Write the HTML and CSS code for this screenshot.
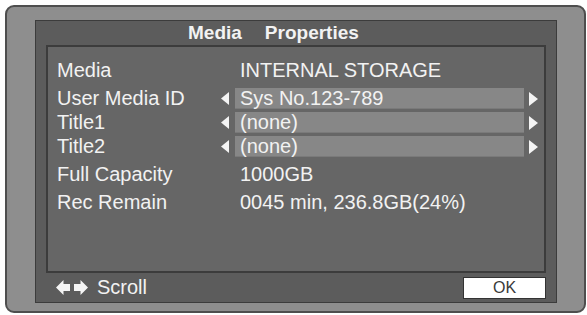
FILE: index.html
```html
<!DOCTYPE html>
<html lang="en">
<head>
  <meta charset="UTF-8" />
  <title>Media Properties</title>
  <link rel="stylesheet" href="styles.css">
</head>
<body>
  <div class="bezel">
    <div class="panel">
      <div class="title-bar">
        <span>Media</span>
        <span>Properties</span>
      </div>

      <div class="content">
        <div class="row">
          <span class="label">Media</span>
          <span class="arrow-slot"></span>
          <span class="value">INTERNAL STORAGE</span>
        </div>

        <div class="field-group">
          <div class="row">
            <span class="label">User Media ID</span>
            <span class="arrow-slot"><svg width="8" height="13" viewBox="0 0 8 13"><polygon points="8,0 8,13 0,6.5" fill="#f4f4f4"/></svg></span>
            <span class="value bar">Sys No.123-789</span>
            <span class="arrow-slot right"><svg width="9" height="14" viewBox="0 0 9 14"><polygon points="0,0 0,14 9,7" fill="#f4f4f4"/></svg></span>
          </div>
          <div class="row">
            <span class="label">Title1</span>
            <span class="arrow-slot"><svg width="8" height="13" viewBox="0 0 8 13"><polygon points="8,0 8,13 0,6.5" fill="#f4f4f4"/></svg></span>
            <span class="value bar">(none)</span>
            <span class="arrow-slot right"><svg width="9" height="14" viewBox="0 0 9 14"><polygon points="0,0 0,14 9,7" fill="#f4f4f4"/></svg></span>
          </div>
          <div class="row">
            <span class="label">Title2</span>
            <span class="arrow-slot"><svg width="8" height="13" viewBox="0 0 8 13"><polygon points="8,0 8,13 0,6.5" fill="#f4f4f4"/></svg></span>
            <span class="value bar">(none)</span>
            <span class="arrow-slot right"><svg width="9" height="14" viewBox="0 0 9 14"><polygon points="0,0 0,14 9,7" fill="#f4f4f4"/></svg></span>
          </div>
        </div>

        <div class="row">
          <span class="label">Full Capacity</span>
          <span class="arrow-slot"></span>
          <span class="value">1000GB</span>
        </div>
        <div class="row">
          <span class="label">Rec Remain</span>
          <span class="arrow-slot"></span>
          <span class="value">0045 min, 236.8GB(24%)</span>
        </div>
      </div>

      <div class="footer">
        <span class="scroll-hint">
          <svg width="32" height="15" viewBox="0 0 32 15">
            <polygon points="0,7.5 7.5,0 7.5,4 14,4 14,11 7.5,11 7.5,15" fill="#f4f4f4"/>
            <polygon points="32,7.5 24.5,0 24.5,4 18,4 18,11 24.5,11 24.5,15" fill="#f4f4f4"/>
          </svg>
          Scroll
        </span>
        <button class="ok-button">OK</button>
      </div>
    </div>
  </div>
</body>
</html>
```

FILE: styles.css
```css
:root {
  --bezel: #8e8e8e;
  --panel: #5c5c5c;
  --content: #666666;
  --bar: #878787;
  --edge: #3c3c3c;
  --text: #f2f2f2;
}

body {
  margin: 0;
  background-color: #ffffff;
  font-family: "Liberation Sans", Arial, sans-serif;
  color: var(--text);
}

.bezel {
  box-sizing: border-box;
  width: 581px;
  height: 308px;
  margin: 5px 0 0 5px;
  padding: 13px 0 0 28px;
  background-color: var(--bezel);
  border: 2px solid #4e4e4e;
  border-radius: 9px;
}

.panel {
  box-sizing: border-box;
  width: 522px;
  height: 283px;
  background-color: var(--panel);
  border: 1px solid var(--edge);
  display: flex;
  flex-direction: column;
}

.title-bar {
  height: 24px;
  display: flex;
  align-items: center;
  gap: 23px;
  padding-left: 152px;
  font-size: 19px;
  font-weight: bold;
}

.content {
  box-sizing: border-box;
  width: 500px;
  height: 228px;
  margin-left: 10px;
  padding: 13px 0 0 9px;
  background-color: var(--content);
  border: 2px solid var(--edge);
  display: flex;
  flex-direction: column;
  gap: 7px;
}

.field-group {
  display: flex;
  flex-direction: column;
  gap: 3px;
}

.row {
  display: flex;
  align-items: center;
  height: 21px;
  font-size: 20px;
  line-height: 21px;
}

.label {
  width: 164px;
}

.arrow-slot {
  width: 14px;
  display: flex;
  align-items: center;
}

.arrow-slot svg {
  display: block;
}

.arrow-slot.right {
  width: auto;
  margin-left: 5px;
}

.value {
  padding-left: 5px;
  white-space: nowrap;
}

.bar {
  box-sizing: border-box;
  width: 289px;
  height: 21px;
  background-color: var(--bar);
  border-bottom: 1px solid #7a7a7a;
}

.footer {
  flex: 1;
  display: flex;
  align-items: center;
  justify-content: space-between;
  padding: 0 10px 0 20px;
}

.scroll-hint {
  display: flex;
  align-items: center;
  gap: 9px;
  font-size: 20px;
}

.ok-button {
  box-sizing: border-box;
  width: 83px;
  height: 22px;
  margin-top: 1px;
  background-color: #ffffff;
  border: 1px solid #333333;
  border-radius: 0;
  font-family: "Liberation Sans", Arial, sans-serif;
  font-size: 16px;
  color: #3a3a3a;
  padding: 0;
}
```
